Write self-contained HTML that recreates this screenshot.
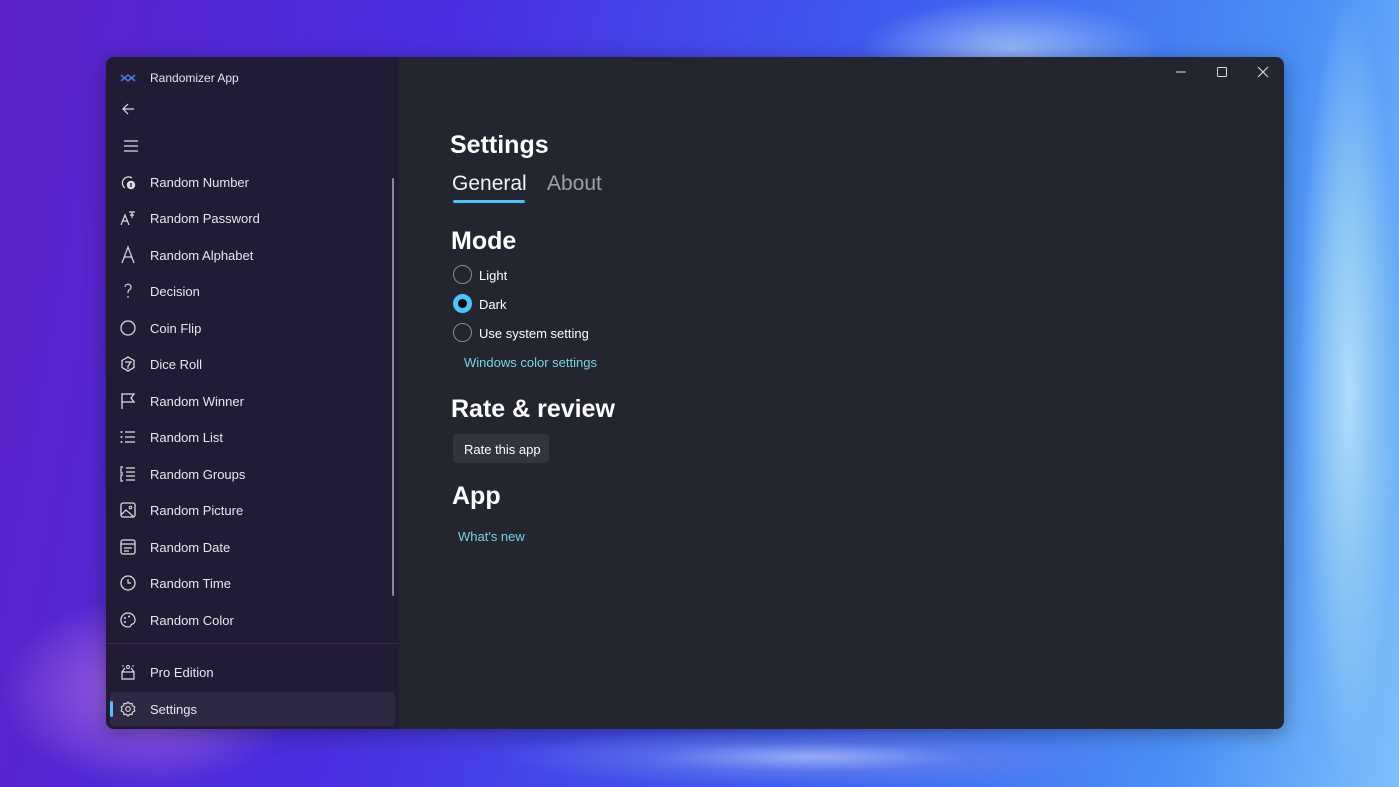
<!DOCTYPE html>
<html><head><meta charset="utf-8"><style>
*{margin:0;padding:0;box-sizing:border-box}
html,body{width:1399px;height:787px;overflow:hidden;background:#4a40e0}
body{font-family:"Liberation Sans",sans-serif}
.root{position:relative;width:1399px;height:787px;overflow:hidden;
background:linear-gradient(100deg,#5a22c8 0%,#4a2fe0 30%,#3f5ef0 60%,#4a8ff5 85%,#7cc0fa 100%);}
.bg1{position:absolute;left:0;top:467px;width:500px;height:320px;background:radial-gradient(closest-side at 30% 70%,#a36ae0 0%,rgba(140,90,220,0) 100%)}
.bg2{position:absolute;left:1150px;top:0;width:249px;height:787px;background:radial-gradient(closest-side at 80% 50%,#b0dcfb 0%,#8cc6f5 45%,rgba(90,160,240,0) 100%)}
.bg3{position:absolute;left:500px;top:687px;width:620px;height:100px;background:radial-gradient(closest-side at 50% 70%,rgba(160,180,245,.9) 0%,rgba(110,130,235,.5) 50%,rgba(80,100,230,0) 100%)}
.bg4{position:absolute;left:860px;top:0;width:300px;height:120px;background:radial-gradient(closest-side at 50% 40%,rgba(168,200,248,.8) 0%,rgba(120,160,240,0) 100%)}
.win{position:absolute;left:106px;top:57px;width:1178px;height:672px;border-radius:8px;overflow:hidden;background:#24262f;box-shadow:0 4px 20px rgba(0,0,0,.35)}
.side{position:absolute;left:0;top:0;width:293px;height:672px;background:#221b35;}
.t{position:absolute;color:#e8e6f0;font-size:13px;white-space:nowrap}
.ico{position:absolute;left:14px;width:16px;height:16px}
.item{position:absolute;left:0;width:293px;height:36px}
.item .t{left:44px;top:11px}
.item .ico{top:10px}
svg{overflow:visible}
.c{position:absolute;color:#fff;white-space:nowrap}
.radio{position:absolute;left:347px;width:19px;height:19px;border-radius:50%;border:1.5px solid #8a8d96}
.link{color:#7ad0ea;font-size:13px}
</style></head><body><div class="root">
<div class="bg1"></div><div class="bg2"></div><div class="bg3"></div><div class="bg4"></div>
<div class="win">
 <div class="side">
  <svg class="ico" style="left:14px;top:13px" viewBox="0 0 16 16"><path d="M1 5l7 6 7-6M1 11l7-6 7 6" stroke="#4a7fe0" stroke-width="1.6" fill="none"/></svg>
  <div class="t" style="left:44px;top:14px;font-size:12px">Randomizer App</div>
  <svg class="ico" style="top:44px;left:15px" viewBox="0 0 16 16"><path d="M13 8H2M7 3L2 8l5 5" stroke="#ddd" stroke-width="1.2" fill="none"/></svg>
  <svg class="ico" style="top:81px;left:18px" viewBox="0 0 16 16"><path d="M0 3h14M0 8h14M0 13h14" stroke="#ddd" stroke-width="1.2"/></svg>
  <div style="position:absolute;left:286px;top:121px;width:2px;height:418px;background:#8d8a98;border-radius:1px"></div>
  <div class="item" style="top:107px"><svg class="ico" viewBox="0 0 16 16"><path d="M12 4A6 6 0 1 0 5 14" stroke="#ddd" stroke-width="1.3" fill="none"/><circle cx="11" cy="11" r="4.2" fill="#ddd"/><path d="M11 9v4" stroke="#221b35" stroke-width="1.4"/></svg><div class="t">Random Number</div></div>
  <div class="item" style="top:143px"><svg class="ico" viewBox="0 0 16 16"><path d="M1 15l4-10 4 10M2.5 11h5M9 2h6M12 2v6M10 5h4" stroke="#ddd" stroke-width="1.2" fill="none"/></svg><div class="t">Random Password</div></div>
  <div class="item" style="top:180px"><svg class="ico" viewBox="0 0 16 16"><path d="M2 16L8 0l6 16M4.5 10h7" stroke="#ddd" stroke-width="1.2" fill="none"/></svg><div class="t">Random Alphabet</div></div>
  <div class="item" style="top:216px"><svg class="ico" viewBox="0 0 16 16"><path d="M5 4a3 3 0 1 1 4 3c-1 .5-1 1.5-1 3" stroke="#ddd" stroke-width="1.2" fill="none"/><circle cx="8" cy="14" r=".9" fill="#ddd"/></svg><div class="t">Decision</div></div>
  <div class="item" style="top:253px"><svg class="ico" viewBox="0 0 16 16"><circle cx="8" cy="8" r="7" stroke="#ddd" stroke-width="1.3" fill="none"/></svg><div class="t">Coin Flip</div></div>
  <div class="item" style="top:289px"><svg class="ico" viewBox="0 0 16 16"><path d="M8 1l6 3.5v7L8 15l-6-3.5v-7z" stroke="#ddd" stroke-width="1.3" fill="none"/><path d="M5 6h6L8 10v3" stroke="#ddd" stroke-width="1.2" fill="none"/></svg><div class="t">Dice Roll</div></div>
  <div class="item" style="top:326px"><svg class="ico" viewBox="0 0 16 16"><path d="M2 16V1h12l-3 4 3 4H2" stroke="#ddd" stroke-width="1.3" fill="none"/></svg><div class="t">Random Winner</div></div>
  <div class="item" style="top:362px"><svg class="ico" viewBox="0 0 16 16"><path d="M5 3h10M5 8h10M5 13h10" stroke="#ddd" stroke-width="1.2"/><circle cx="1.5" cy="3" r="1" fill="#ddd"/><circle cx="1.5" cy="8" r="1" fill="#ddd"/><circle cx="1.5" cy="13" r="1" fill="#ddd"/></svg><div class="t">Random List</div></div>
  <div class="item" style="top:399px"><svg class="ico" viewBox="0 0 16 16"><path d="M6 2h9M6 6h9M6 10h9M6 14h9M3 1H1v6h2M3 9H1v6h2" stroke="#ddd" stroke-width="1.2" fill="none"/></svg><div class="t">Random Groups</div></div>
  <div class="item" style="top:435px"><svg class="ico" viewBox="0 0 16 16"><rect x="1" y="1" width="14" height="14" rx="2" stroke="#ddd" stroke-width="1.3" fill="none"/><path d="M1 13l5-5 8 7" stroke="#ddd" stroke-width="1.2" fill="none"/><circle cx="10.5" cy="5.5" r="1.3" stroke="#ddd" fill="none"/></svg><div class="t">Random Picture</div></div>
  <div class="item" style="top:472px"><svg class="ico" viewBox="0 0 16 16"><rect x="1" y="1" width="14" height="14" rx="2" stroke="#ddd" stroke-width="1.3" fill="none"/><path d="M1 5h14M4 9h8M4 12h5" stroke="#ddd" stroke-width="1.2"/></svg><div class="t">Random Date</div></div>
  <div class="item" style="top:508px"><svg class="ico" viewBox="0 0 16 16"><circle cx="8" cy="8" r="7" stroke="#ddd" stroke-width="1.3" fill="none"/><path d="M8 4v4h3" stroke="#ddd" stroke-width="1.2" fill="none"/></svg><div class="t">Random Time</div></div>
  <div class="item" style="top:545px"><svg class="ico" viewBox="0 0 16 16"><path d="M8 1a7 7 0 1 0 2 13.7c1-.4.6-2 1.8-2.5C14 12 15 10 15 8A7 7 0 0 0 8 1z" stroke="#ddd" stroke-width="1.2" fill="none"/><circle cx="5" cy="6" r="1" fill="#ddd"/><circle cx="9" cy="4.5" r="1" fill="#ddd"/><circle cx="5" cy="10" r="1" fill="#ddd"/></svg><div class="t">Random Color</div></div>
  <div style="position:absolute;left:0;top:586px;width:293px;height:1px;background:#342c48"></div>
  <div class="item" style="top:597px"><svg class="ico" viewBox="0 0 16 16"><path d="M2 8h12v7H2zM2 8l3-4M14 8l-3-4" stroke="#ddd" stroke-width="1.2" fill="none"/><circle cx="3" cy="2" r=".8" fill="#ddd"/><circle cx="8" cy="3" r="1.5" stroke="#ddd" fill="none"/><circle cx="13" cy="2" r=".8" fill="#ddd"/></svg><div class="t">Pro Edition</div></div>
  <div style="position:absolute;left:4px;top:635px;width:285px;height:34px;background:#2f2843;border-radius:4px"></div>
  <div style="position:absolute;left:4px;top:644px;width:3px;height:16px;background:#4cc2ff;border-radius:2px"></div>
  <div class="item" style="top:634px"><svg class="ico" viewBox="0 0 16 16"><circle cx="8" cy="8" r="2.3" stroke="#ddd" stroke-width="1.1" fill="none"/><path d="M8 1l1.6 1.8 2.4-.4.4 2.4L14.8 6 14 8l.8 2-2.4 1.2-.4 2.4-2.4-.4L8 15l-1.6-1.8-2.4.4-.4-2.4L1.2 10 2 8l-.8-2 2.4-1.2.4-2.4 2.4.4z" stroke="#ddd" stroke-width="1.1" fill="none"/></svg><div class="t">Settings</div></div>
 </div>
 <svg style="position:absolute;left:1069px;top:9px" width="12" height="12" viewBox="0 0 12 12"><path d="M1 6h10" stroke="#ddd"/></svg>
 <svg style="position:absolute;left:1110px;top:9px" width="12" height="12" viewBox="0 0 12 12"><rect x="1.5" y="1.5" width="9" height="9" rx="1" stroke="#ddd" fill="none"/></svg>
 <svg style="position:absolute;left:1151px;top:9px" width="12" height="12" viewBox="0 0 12 12"><path d="M1 1l10 10M11 1L1 11" stroke="#ddd" stroke-width="1.1"/></svg>
 <div class="c" style="left:344px;top:74px;font-size:25px;font-weight:bold">Settings</div>
 <div class="c" style="left:346px;top:115px;font-size:21px;color:#f2f2f2">General</div>
 <div class="c" style="left:441px;top:115px;font-size:21px;color:#9ea0a8">About</div>
 <div style="position:absolute;left:347px;top:143px;width:72px;height:3px;background:#4cc2ff;border-radius:2px"></div>
 <div class="c" style="left:345px;top:170px;font-size:25px;font-weight:bold">Mode</div>
 <div class="radio" style="top:208px"></div><div class="c" style="left:373px;top:211px;font-size:13px">Light</div>
 <div class="radio" style="top:237px;border:5px solid #4cc2ff;background:#000"></div><div class="c" style="left:373px;top:240px;font-size:13px">Dark</div>
 <div class="radio" style="top:266px"></div><div class="c" style="left:373px;top:269px;font-size:13px">Use system setting</div>
 <div class="c link" style="left:358px;top:298px">Windows color settings</div>
 <div class="c" style="left:345px;top:338px;font-size:25px;font-weight:bold">Rate &amp; review</div>
 <div style="position:absolute;left:347px;top:377px;width:96px;height:29px;background:#33353d;border-radius:4px"></div>
 <div class="c" style="left:358px;top:385px;font-size:13px">Rate this app</div>
 <div class="c" style="left:346px;top:425px;font-size:25px;font-weight:bold">App</div>
 <div class="c link" style="left:352px;top:472px">What's new</div>
</div>
</div></body></html>
